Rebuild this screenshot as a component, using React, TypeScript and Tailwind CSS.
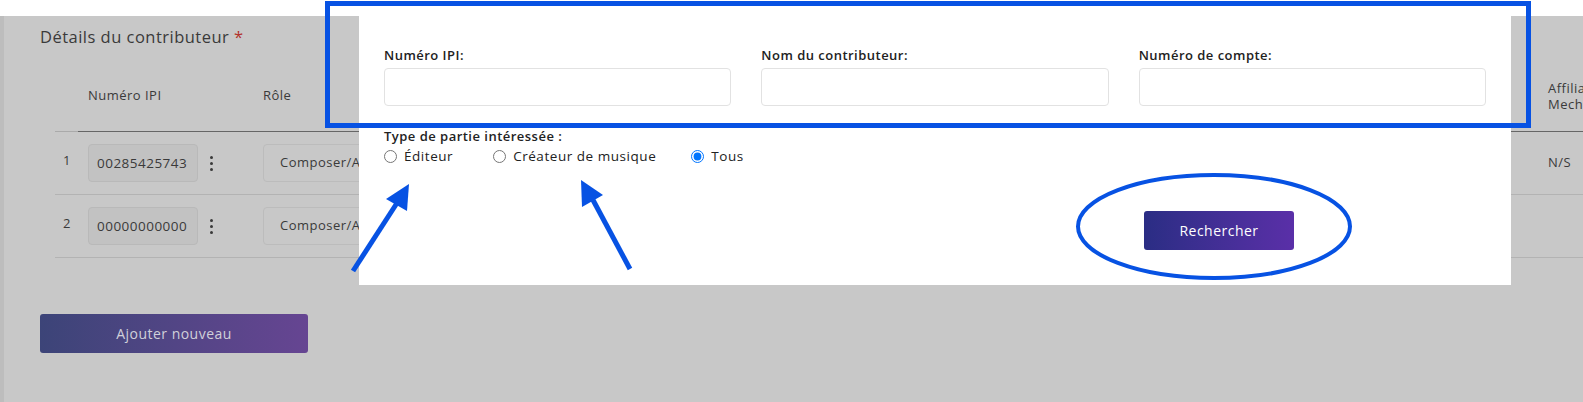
import React from "react";

const rows = [
  { n: 1, ipi: "00285425743", role: "Composer/Author", affil: "N/S" },
  { n: 2, ipi: "00000000000", role: "Composer/Author", affil: "" },
];

function Kebab() {
  return (
    <div className="flex flex-col items-center gap-[3px] px-[12px]">
      <span className="h-[3px] w-[3px] rounded-full bg-[#3a3a3a]" />
      <span className="h-[3px] w-[3px] rounded-full bg-[#3a3a3a]" />
      <span className="h-[3px] w-[3px] rounded-full bg-[#3a3a3a]" />
    </div>
  );
}

function SearchModal() {
  return (
    <div className="absolute left-[359px] top-0 h-[285px] w-[1152px] bg-white px-[25px] pt-[46px] text-[#222]">
      <div className="grid grid-cols-3 gap-x-[30px]">
        {["Numéro IPI:", "Nom du contributeur:", "Numéro de compte:"].map((l) => (
          <div key={l} className="flex flex-col">
            <label className="mb-1 text-[13px] leading-[18px] font-semibold">{l}</label>
            <input className="h-[38px] rounded-[4px] border border-[#e2e2e2] bg-white px-3 outline-none" />
          </div>
        ))}
      </div>
      <div className="mt-[21px] text-[13px] leading-[18px] font-semibold">
        Type de partie intéressée :
      </div>
      <div className="mt-[1px] flex h-5 items-center text-[13.5px] tracking-[0.04em]">
        <label className="flex items-center gap-[7px]">
          <input type="radio" name="type" className="m-0 h-[13px] w-[13px]" />
          Éditeur
        </label>
        <label className="ml-[40px] flex items-center gap-[7px]">
          <input type="radio" name="type" className="m-0 h-[13px] w-[13px]" />
          Créateur de musique
        </label>
        <label className="ml-[35px] flex items-center gap-[7px]">
          <input type="radio" name="type" defaultChecked className="m-0 h-[13px] w-[13px]" />
          Tous
        </label>
      </div>
      <div className="mt-[45px] flex">
        <button className="ml-[760px] h-[39px] w-[150px] rounded-[3px] bg-gradient-to-r from-[#2a2d84] to-[#5a2fa8] text-[14px] font-medium text-white">
          Rechercher
        </button>
      </div>
    </div>
  );
}

function Annotations() {
  const blue = "#0752e3";
  return (
    <svg className="pointer-events-none absolute inset-0" width="1583" height="402">
      <rect x="327.5" y="3.5" width="1201" height="122" fill="none" stroke={blue} strokeWidth="5" />
      <ellipse cx="1214" cy="226.5" rx="136" ry="51.5" fill="none" stroke={blue} strokeWidth="4" />
      <line x1="353" y1="271" x2="397" y2="203" stroke={blue} strokeWidth="5" />
      <polygon points="409,184 386,199 407,211" fill={blue} />
      <line x1="630" y1="269" x2="593" y2="200" stroke={blue} strokeWidth="5" />
      <polygon points="581,180 582,207 603,195" fill={blue} />
    </svg>
  );
}

export default function App() {
  return (
    <div
      className="relative h-[402px] w-[1583px] overflow-hidden bg-white tracking-[0.03em]"
      style={{ fontFamily: '"Open Sans", "Noto Sans", sans-serif' }}
    >
      <div className="h-4 bg-white" />
      <div className="flex h-[386px] bg-[#c8c8c8]">
        <div className="w-1 shrink-0 bg-[#bdbdbd]" />
        <div className="min-w-0 flex-1 pl-9 pt-[9px] text-[#3a3a3a]">
          <h2 className="text-[16.5px] leading-6">
            Détails du contributeur <span className="text-[#b3322a]">*</span>
          </h2>
          <div className="mt-3 ml-[15px] w-[1600px] text-[13px]">
            <div className="flex h-[70px] items-center">
              <div className="w-[23px]" />
              <div className="w-[185px] pl-[10px]">Numéro IPI</div>
              <div className="w-[1285px]">Rôle</div>
              <div className="leading-4">
                Affiliation
                <br />
                Mechanical
              </div>
            </div>
            <div className="flex h-px">
              <div className="w-[23px] bg-[#aaaaaa]" />
              <div className="flex-1 bg-[#666666]" />
            </div>
            {rows.map((r) => (
              <div key={r.n} className="flex h-[63px] items-center border-b border-[#b3b3b3]">
                <div className="w-[23px] pb-1 pl-2">{r.n}</div>
                <div className="flex w-[185px] items-center pl-[10px]">
                  <div className="flex h-[38px] w-[110px] shrink-0 items-center overflow-hidden whitespace-nowrap rounded-[4px] border border-[#b9b9b9] bg-[#c2c2c2] pl-[8px] text-[13.5px]">
                    {r.ipi}
                  </div>
                  <Kebab />
                </div>
                <div className="w-[1285px]">
                  <div className="flex h-[38px] w-[300px] items-center rounded-[4px] border border-[#bcbcbc] pl-[16px] text-[13px]">
                    {r.role}
                  </div>
                </div>
                <div>{r.affil}</div>
              </div>
            ))}
          </div>
          <button className="mt-[56px] h-[39px] w-[268px] rounded-[3px] bg-gradient-to-r from-[#3c4478] to-[#664592] text-[14px] text-[#d0d0da]">
            Ajouter nouveau
          </button>
        </div>
      </div>
      <SearchModal />
      <Annotations />
    </div>
  );
}
